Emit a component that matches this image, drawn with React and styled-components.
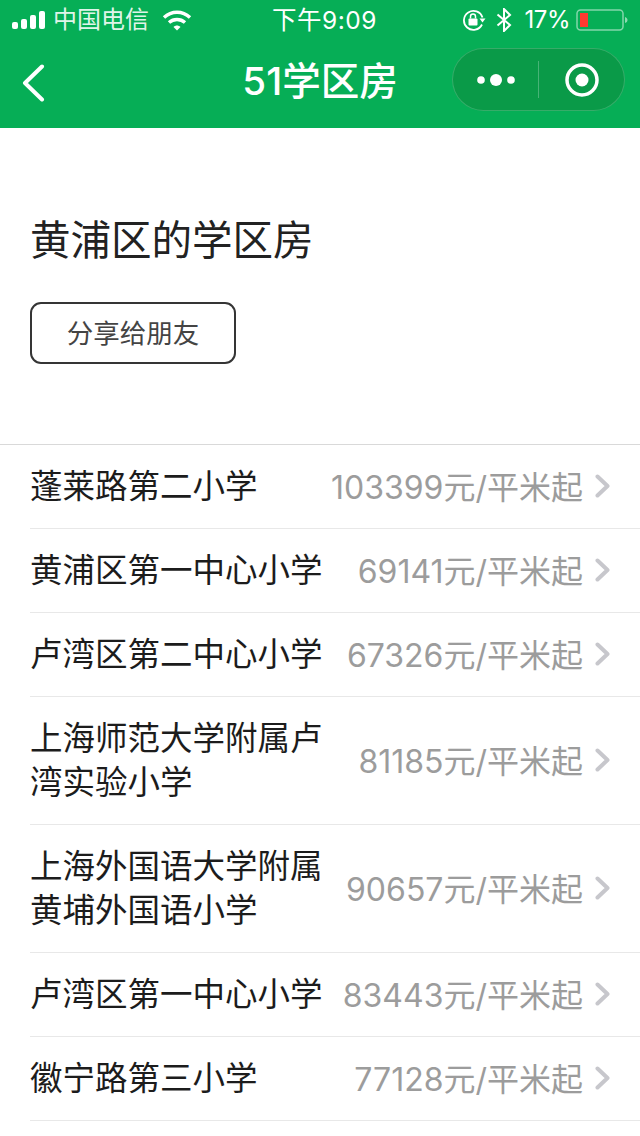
import React from 'react';
import styled, { createGlobalStyle } from 'styled-components';

const sans = '"Inter", "Noto Sans CJK SC", sans-serif';

const schools = [
  { name: '蓬莱路第二小学', price: 103399 },
  { name: '黄浦区第一中心小学', price: 69141 },
  { name: '卢湾区第二中心小学', price: 67326 },
  { name: '上海师范大学附属卢湾实验小学', price: 81185 },
  { name: '上海外国语大学附属黄埔外国语小学', price: 90657 },
  { name: '卢湾区第一中心小学', price: 83443 },
  { name: '徽宁路第三小学', price: 77128 },
];

const GlobalStyle = createGlobalStyle`
  html, body {
    margin: 0;
    padding: 0;
    height: 1136px;
    overflow: hidden;
    background: #fff;
    font-family: ${sans};
  }
`;

const Header = styled.header`
  background: #06ae56;
  height: 128px;
  color: #fff;
`;

const StatusBar = styled.div`
  height: 40px;
  padding: 0 12px;
  display: grid;
  grid-template-columns: 1fr auto 1fr;
  align-items: center;
  font-size: 24px;
  line-height: 40px;
`;

const StatusGroup = styled.div`
  display: flex;
  align-items: center;
  justify-content: ${(p) => (p.$end ? 'flex-end' : 'flex-start')};
  gap: ${(p) => (p.$end ? '10px' : '9px')};
`;

const Carrier = styled.span`
  margin: 0 4px 0 -1px;
  color: rgba(255, 255, 255, 0.9);
`;

const Clock = styled.span`
  font-size: 24.5px;
  letter-spacing: 0.5px;
  margin-left: 9px;
`;

const Percent = styled.span`
  margin: 0 -4px 0 3px;
  font-size: 24px;
  letter-spacing: -0.5px;
`;

const NavBar = styled.nav`
  height: 88px;
  padding: 0 15px;
  display: grid;
  grid-template-columns: 1fr auto 1fr;
  align-items: center;
`;

const BackButton = styled.div`
  padding: 0 0 2px 7px;
  display: flex;
`;

const NavTitle = styled.h1`
  margin: 0 0 6px;
  font-size: 38.500px;
  line-height: 50px;
  font-weight: 500;
`;

const Capsule = styled.div`
  justify-self: end;
  width: 173px;
  height: 63px;
  margin-bottom: 9px;
  box-sizing: border-box;
  border: 1px solid rgba(255, 255, 255, 0.18);
  border-radius: 32px;
  background: #0a9a48;
  display: flex;
  align-items: center;
`;

const CapsulePart = styled.div`
  flex: 1;
  height: 37px;
  display: flex;
  align-items: center;
  justify-content: center;
  & + & {
    border-left: 1px solid rgba(255, 255, 255, 0.25);
  }
`;

const Intro = styled.section`
  padding: 88px 30px 80px;
  border-bottom: 1px solid #d9d9d9;
`;

const PageTitle = styled.h2`
  margin: 0 0 36px;
  font-size: 40.5px;
  line-height: 50px;
  font-weight: 400;
  color: #222;
`;

const ShareButton = styled.button`
  display: block;
  width: 206px;
  height: 62px;
  padding: 0 0 4px;
  border: 2px solid #353535;
  border-radius: 11px;
  background: #fff;
  color: #444;
  font-family: ${sans};
  font-size: 26.500px;
`;

const List = styled.ul`
  margin: 0;
  padding: 0 0 0 30px;
  list-style: none;
`;

const Row = styled.li`
  padding: 20px 30px 19px 0;
  border-bottom: 1px solid #e8e8e8;
  display: flex;
  align-items: center;
  justify-content: space-between;
`;

const SchoolName = styled.div`
  width: 294px;
  flex: none;
  font-size: 32.500px;
  line-height: 44px;
  color: #1c1c1c;
`;

const PriceGroup = styled.div`
  display: flex;
  align-items: center;
  gap: 12px;
`;

const Price = styled.span`
  padding-top: 2px;
  font-size: 32px;
  line-height: 42px;
  color: #9c9c9c;
  white-space: nowrap;
`;

const Chevron = styled.svg`
  margin-bottom: 2px;
`;

const SignalIcon = () => (
  <svg width="33" height="18" viewBox="0 0 33 18" fill="#fff">
    <rect x="0" y="11" width="6" height="7" rx="2" />
    <rect x="9" y="8" width="6" height="10" rx="2" />
    <rect x="18" y="4" width="6" height="14" rx="2" />
    <rect x="27" y="0" width="6" height="18" rx="2" />
  </svg>
);

const WifiIcon = () => (
  <svg width="30" height="22" viewBox="0 0 30 22" fill="none" stroke="#fff" strokeWidth="3.4">
    <path d="M2 8.500C9.500 1.500 20.500 1.500 28 8.500" />
    <path d="M7 13.500C11.500 9.500 18.500 9.500 23 13.500" />
    <path d="M11.500 18L15 21.500 18.500 18C16.500 16 13.500 16 11.500 18Z" fill="#fff" stroke="none" />
  </svg>
);

const LockIcon = () => (
  <svg width="24" height="22" viewBox="0 0 24 22" fill="none" stroke="#fff">
    <path d="M20 15.500A9.500 9.500 0 1 1 20.500 8.500" strokeWidth="1.800" />
    <path d="M17.500 9.500L23.500 9.500 20.500 13.500Z" fill="#fff" stroke="none" />
    <rect x="6.500" y="9.500" width="9" height="7" rx="1" fill="#fff" stroke="none" />
    <path d="M8.500 9.500V7.500A2.500 2.500 0 0 1 13.500 7.500V9.500" strokeWidth="1.500" />
  </svg>
);

const BluetoothIcon = () => (
  <svg width="16" height="24" viewBox="0 0 16 24" fill="none" stroke="#fff" strokeWidth="2">
    <path d="M1.500 6.500L14 17 8 23V1L14 7 1.500 17.500" />
  </svg>
);

const BatteryIcon = () => (
  <svg width="52" height="24" viewBox="0 0 52 24">
    <rect x="1" y="2" width="46" height="20" rx="3.500" fill="none" stroke="rgba(255,255,255,0.5)" strokeWidth="1.500" />
    <rect x="4" y="5" width="8" height="14" fill="#ff3b30" />
    <path d="M49 9C50.500 9.500 51.500 10.500 51.500 12S50.500 14.500 49 15Z" fill="rgba(255,255,255,0.55)" />
  </svg>
);

const BackIcon = () => (
  <svg width="24" height="38" viewBox="0 0 24 38" fill="none" stroke="#fff" strokeWidth="4" strokeLinecap="round" strokeLinejoin="round">
    <path d="M20 2.500L3 19 20 35.500" />
  </svg>
);

const DotsIcon = () => (
  <svg width="38" height="14" viewBox="0 0 38 14" fill="#fff">
    <circle cx="4" cy="7" r="3.800" />
    <circle cx="19" cy="7" r="6" />
    <circle cx="34" cy="7" r="3.800" />
  </svg>
);

const TargetIcon = () => (
  <svg width="34" height="34" viewBox="0 0 34 34">
    <circle cx="17" cy="17" r="15" fill="none" stroke="#fff" strokeWidth="3.500" />
    <circle cx="17" cy="17" r="6.500" fill="#fff" />
  </svg>
);

const ChevronIcon = () => (
  <Chevron width="15" height="24" viewBox="0 0 15 24" fill="none" stroke="#c7c7cc" strokeWidth="4" strokeLinecap="round" strokeLinejoin="round">
    <path d="M2.500 2.500L12.500 12 2.500 21.500" />
  </Chevron>
);

const App = () => {
  return (
    <>
      <GlobalStyle />
      <Header>
        <StatusBar>
          <StatusGroup>
            <SignalIcon />
            <Carrier>中国电信</Carrier>
            <WifiIcon />
          </StatusGroup>
          <Clock>下午9:09</Clock>
          <StatusGroup $end>
            <LockIcon />
            <BluetoothIcon />
            <Percent>17%</Percent>
            <BatteryIcon />
          </StatusGroup>
        </StatusBar>
        <NavBar>
          <BackButton>
            <BackIcon />
          </BackButton>
          <NavTitle>51学区房</NavTitle>
          <Capsule>
            <CapsulePart>
              <DotsIcon />
            </CapsulePart>
            <CapsulePart>
              <TargetIcon />
            </CapsulePart>
          </Capsule>
        </NavBar>
      </Header>
      <Intro>
        <PageTitle>黄浦区的学区房</PageTitle>
        <ShareButton type="button">分享给朋友</ShareButton>
      </Intro>
      <List>
        {schools.map((school) => (
          <Row key={school.name}>
            <SchoolName>{school.name}</SchoolName>
            <PriceGroup>
              <Price>{school.price}元/平米起</Price>
              <ChevronIcon />
            </PriceGroup>
          </Row>
        ))}
      </List>
    </>
  );
};

export default App;
